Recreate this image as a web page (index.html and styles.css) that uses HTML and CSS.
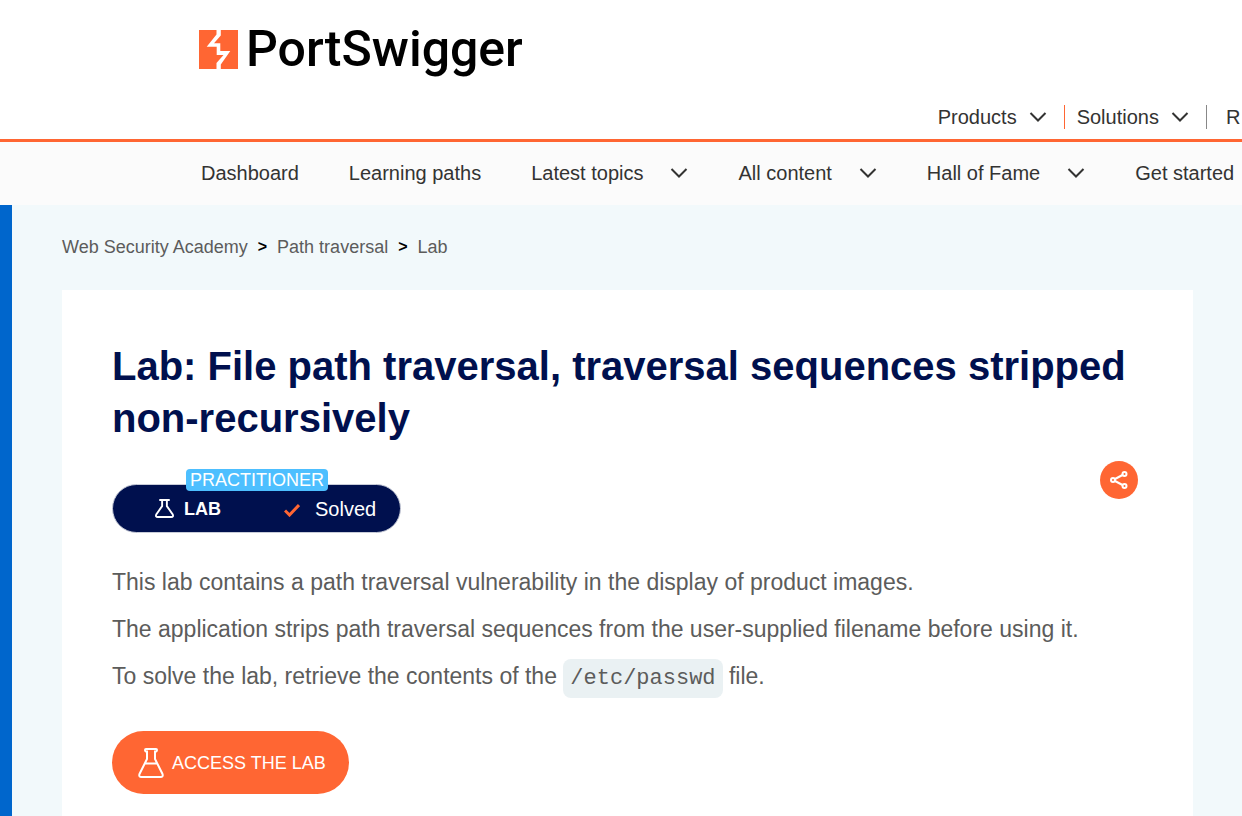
FILE: index.html
```html
<!DOCTYPE html>
<html lang="en">
<head>
<meta charset="utf-8">
<meta name="viewport" content="width=device-width, initial-scale=1">
<title>Lab: File path traversal | Web Security Academy</title>
<link rel="stylesheet" href="styles.css">
</head>
<body>
<header class="site-header">
  <a class="brand" href="#">
    <svg class="brand-mark" viewBox="0 0 39 39" aria-hidden="true"><rect width="39" height="39" fill="#ff6633"/><path d="M17.500 0h4.300v5.500L15 13.300h6.300V21h10L21.800 34.500V39h-4.300v-6L24.500 25h-6.800v-8.200h-10L17.500 4.500z" fill="#fff"/></svg>
    <span class="brand-name">PortSwigger</span>
  </a>
  <nav class="main-nav" aria-label="Main">
    <button class="main-item" type="button">Products <svg class="chevron" viewBox="0 0 18 12" aria-hidden="true"><path d="M1.500 2 9 9.500 16.500 2"/></svg></button>
    <button class="main-item" type="button">Solutions <svg class="chevron" viewBox="0 0 18 12" aria-hidden="true"><path d="M1.500 2 9 9.500 16.500 2"/></svg></button>
    <a class="main-item" href="#">R</a>
  </nav>
</header>
<nav class="sub-nav" aria-label="Academy">
  <a href="#">Dashboard</a>
  <a href="#">Learning paths</a>
  <button type="button">Latest topics <svg class="chevron" viewBox="0 0 18 12" aria-hidden="true"><path d="M1.500 2 9 9.500 16.500 2"/></svg></button>
  <button type="button">All content <svg class="chevron" viewBox="0 0 18 12" aria-hidden="true"><path d="M1.500 2 9 9.500 16.500 2"/></svg></button>
  <button type="button">Hall of Fame <svg class="chevron" viewBox="0 0 18 12" aria-hidden="true"><path d="M1.500 2 9 9.500 16.500 2"/></svg></button>
  <a href="#">Get started</a>
</nav>
<main class="page">
  <nav class="crumbs" aria-label="Breadcrumb">
    <a href="#">Web Security Academy</a>
    <span class="crumb-sep">&gt;</span>
    <a href="#">Path traversal</a>
    <span class="crumb-sep">&gt;</span>
    <a href="#">Lab</a>
  </nav>
  <article class="card">
    <h1>Lab: File path traversal, traversal sequences stripped non-recursively</h1>
    <div class="status-row">
      <div class="status">
        <span class="level">PRACTITIONER</span>
        <svg class="flask-small" viewBox="0 0 20 20" aria-hidden="true"><path d="M4.500 1h11M7.500 1v6.500L1.500 16Q0 19 3 19h14q3 0 1.500-3L12.500 7.500V1"/></svg>
        <span class="lab">LAB</span>
        <svg class="tick" viewBox="0 0 16 14" aria-hidden="true"><path d="M1 7.500 5.500 12 15 2"/></svg>
        <span class="solved">Solved</span>
      </div>
      <button class="share" type="button" aria-label="Share"><svg viewBox="0 0 18 18" aria-hidden="true"><path d="M5 8 12.500 4M5 10l7.500 4"/><circle cx="3" cy="9" r="2"/><circle cx="14.500" cy="3" r="2"/><circle cx="14.500" cy="15" r="2"/></svg></button>
    </div>
    <p>This lab contains a path traversal vulnerability in the display of product images.</p>
    <p>The application strips path traversal sequences from the user-supplied filename before using it.</p>
    <p>To solve the lab, retrieve the contents of the <code>/etc/passwd</code> file.</p>
    <a class="access" href="#"><svg viewBox="0 0 26 32" aria-hidden="true"><path d="M8 2h10q1 0 1 1t-1 1.500h-1V12l7.500 15q1 3-2 3H3.500q-3 0-2-3L9 12V4.500H8Q7 4 7 3t1-1zM7 16.500h12"/></svg>ACCESS THE LAB</a>
  </article>
</main>
</body>
</html>
```
FILE: styles.css
```css
* {
  box-sizing: border-box;
}

body {
  margin: 0;
  min-height: 100vh;
  display: flex;
  flex-direction: column;
  background: #fff;
  color: #333332;
  font-family: "Liberation Sans", Arial, sans-serif;
  font-size: 20px;
  line-height: 24px;
}

a {
  color: inherit;
  text-decoration: none;
}

button {
  padding: 0;
  border: 0;
  background: none;
  color: inherit;
  font: inherit;
}

.site-header {
  padding-top: 19px;
  border-bottom: 3px solid #ff6633;
}

.brand {
  display: flex;
  align-items: center;
  gap: 8px;
  height: 60px;
  padding-left: 199px;
}

.brand-mark {
  width: 39px;
  height: 39px;
}

.brand-name {
  color: #000;
  font-family: Roboto, sans-serif;
  font-size: 50px;
  font-weight: 500;
  line-height: 60px;
}

.main-nav {
  display: flex;
  margin-left: 75.5%;
  padding: 26px 0 10px;
}

.main-item {
  display: flex;
  flex: none;
  align-items: center;
  gap: 12px;
  margin-right: 17px;
}

.main-item + .main-item {
  padding-left: 12px;
  border-left: 1px solid #ff6633;
}

.main-item:last-child {
  margin-right: 0;
  padding-left: 19px;
  border-left-color: #888;
}

.chevron {
  flex: none;
  width: 18px;
  height: 12px;
  fill: none;
  stroke: #333332;
  stroke-width: 2;
}

.sub-nav {
  display: flex;
  gap: 50px;
  padding: 19px 0 20px 201px;
  background: #fbfbfb;
  white-space: nowrap;
}

.sub-nav button {
  display: flex;
  align-items: center;
  gap: 27px;
}

.page {
  flex: 1;
  padding: 30px 49px 0 50px;
  border-left: 12px solid #0066cc;
  background: #f2f9fb;
}

.crumbs {
  display: flex;
  gap: 10px;
  margin-bottom: 31px;
  color: #5c5c5b;
  font-size: 18px;
}

.crumb-sep {
  color: #000;
  font-size: 16px;
  font-weight: 700;
}

.card {
  padding: 50px 50px 22px;
  background: #fff;
}

h1 {
  margin: 0;
  color: #00104e;
  font-size: 40px;
  line-height: 52px;
}

.status-row {
  display: flex;
  justify-content: space-between;
  align-items: flex-start;
  margin-top: 17px;
  padding-right: 5px;
}

.status {
  position: relative;
  display: flex;
  align-items: center;
  height: 49px;
  margin-top: 23px;
  padding: 0 24px 0 42px;
  border: 1px solid #c8ccd8;
  border-radius: 25px;
  background: #00104e;
  color: #fff;
}

.level {
  position: absolute;
  top: -16px;
  left: 73px;
  padding: 0 4px;
  border-radius: 4px;
  background: #4dbfff;
  font-size: 18px;
  line-height: 22px;
}

.flask-small {
  width: 19px;
  height: 19px;
  margin-right: 10px;
  fill: none;
  stroke: #fff;
  stroke-width: 2;
}

.lab {
  font-size: 18px;
  font-weight: 700;
}

.tick {
  width: 16px;
  height: 14px;
  margin: 3px 15px 0 63px;
  fill: none;
  stroke: #ff6633;
  stroke-width: 3;
}

.share {
  display: grid;
  place-items: center;
  width: 38px;
  height: 38px;
  border-radius: 50%;
  background: #ff6633;
}

.share svg {
  width: 18px;
  height: 18px;
  fill: none;
  stroke: #fff;
  stroke-width: 2;
}

.card p {
  margin: 0;
  color: #5c5c5b;
  font-size: 23px;
  line-height: 47px;
}

.status-row + p {
  margin-top: 26px;
}

code {
  padding: 7px;
  border-radius: 8px;
  background: #eaf1f3;
  font-family: "Liberation Mono", "Courier New", monospace;
  font-size: 22px;
}

.access {
  display: inline-flex;
  align-items: center;
  gap: 8px;
  height: 63px;
  margin-top: 29px;
  padding: 0 23px 0 26px;
  border-radius: 32px;
  background: #ff6633;
  color: #fff;
  font-size: 18px;
}

.access svg {
  width: 26px;
  height: 32px;
  fill: none;
  stroke: #fff;
  stroke-width: 2;
}
```
